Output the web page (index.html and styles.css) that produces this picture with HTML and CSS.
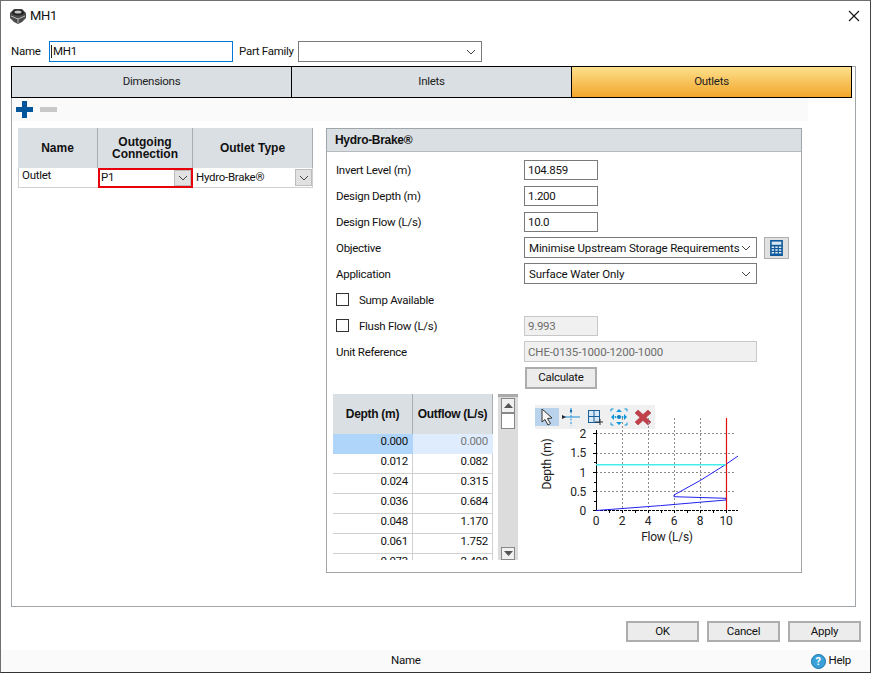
FILE: index.html
```html
<!DOCTYPE html>
<html lang="en">
<head>
<meta charset="utf-8">
<title>MH1</title>
<link rel="stylesheet" href="styles.css">
</head>
<body>
<div class="window">
  <div class="titlebar">
    <svg class="title-icon" width="18" height="16" viewBox="0 0 18 16"><path d="M1 5 L5 1 H13 L17 5 V10 L13 14 L9 16 L5 14 L1 10 Z" fill="#4a4a4a"/><ellipse cx="9" cy="4.500" rx="6" ry="3" fill="#222"/><ellipse cx="9" cy="4" rx="3.500" ry="1.500" fill="#c4c4c4"/><path d="M2 8 L9 11 L16 8 M9 11 V15" stroke="#bbb" fill="none"/></svg>
    <span class="title-text">MH1</span>
    <svg class="close" width="12" height="12" viewBox="0 0 12 12"><path d="M1 1 L11 11 M11 1 L1 11" stroke="#111" stroke-width="1.1"/></svg>
  </div>
  <div class="name-row">
    <label class="name-label">Name</label>
    <div class="input name-input"><span class="caret"></span>MH1</div>
    <label class="family-label">Part Family</label>
    <div class="input family-input"><svg class="chev" width="10" height="6" viewBox="0 0 10 6"><path d="M1 1 L5 5 L9 1" fill="none" stroke="#444"/></svg></div>
  </div>
  <div class="tabpanel">
    <div class="tabs">
      <div class="tab tab-a">Dimensions</div>
      <div class="tab tab-b">Inlets</div>
      <div class="tab tab-active">Outlets</div>
    </div>
    <div class="toolbar">
      <svg width="17" height="17" viewBox="0 0 17 17"><path d="M6 0 H11 V6 H17 V11 H11 V17 H6 V11 H0 V6 H6 Z" fill="#00559b"/></svg>
      <div class="minus"></div>
    </div>
    <div class="content">
      <div class="outlet-grid">
        <div class="og-head og-c1">Name</div>
        <div class="og-head og-c2">Outgoing<br>Connection</div>
        <div class="og-head og-c3">Outlet Type</div>
        <div class="og-cell og-c1 og-name">Outlet</div>
        <div class="og-cell og-c2 og-sel">P1<span class="cell-btn"><svg width="10" height="6" viewBox="0 0 10 6"><path d="M1 1 L5 5 L9 1" fill="none" stroke="#444"/></svg></span></div>
        <div class="og-cell og-c3 og-type">Hydro-Brake®<span class="cell-btn"><svg width="10" height="6" viewBox="0 0 10 6"><path d="M1 1 L5 5 L9 1" fill="none" stroke="#444"/></svg></span></div>
      </div>
      <div class="panel">
        <div class="panel-head">Hydro-Brake®</div>
        <div class="panel-body">
          <div class="row"><span class="lab">Invert Level (m)</span><div class="input num">104.859</div></div>
          <div class="row"><span class="lab">Design Depth (m)</span><div class="input num">1.200</div></div>
          <div class="row"><span class="lab">Design Flow (L/s)</span><div class="input num">10.0</div></div>
          <div class="row"><span class="lab">Objective</span><div class="input wide">Minimise Upstream Storage Requirements<svg class="chev" width="10" height="6" viewBox="0 0 10 6"><path d="M1 1 L5 5 L9 1" fill="none" stroke="#444"/></svg></div>
            <div class="calc-btn"><svg width="16" height="20" viewBox="0 0 16 20"><rect width="16" height="20" fill="#0f5a9c"/><rect x="2" y="2" width="12" height="4" fill="#d8e6f2"/><path d="M2 8h3v2H2zM6.500 8h3v2h-3zM11 8h3v2h-3zM2 11.500h3v2H2zM6.500 11.500h3v2h-3zM11 11.500h3v2h-3zM2 15h3v2H2zM6.500 15h3v2h-3zM11 15h3v2h-3z" fill="#e6eef6"/></svg></div>
          </div>
          <div class="row"><span class="lab">Application</span><div class="input wide">Surface Water Only<svg class="chev" width="10" height="6" viewBox="0 0 10 6"><path d="M1 1 L5 5 L9 1" fill="none" stroke="#444"/></svg></div></div>
          <div class="row"><span class="check"></span><span class="chk-lab">Sump Available</span></div>
          <div class="row"><span class="check"></span><span class="chk-lab chk-short">Flush Flow (L/s)</span><div class="input num disabled">9.993</div></div>
          <div class="row"><span class="lab">Unit Reference</span><div class="input wide disabled">CHE-0135-1000-1200-1000</div></div>
          <div class="row row-btn"><span class="spacer"></span><div class="button calc">Calculate</div></div>
          <div class="lower">
            <div class="table-wrap">
              <div class="table">
                <div class="th th1">Depth (m)</div><div class="th">Outflow (L/s)</div>
                <div class="td sel1">0.000</div><div class="td sel2">0.000</div>
                <div class="td">0.012</div><div class="td">0.082</div>
                <div class="td">0.024</div><div class="td">0.315</div>
                <div class="td">0.036</div><div class="td">0.684</div>
                <div class="td">0.048</div><div class="td">1.170</div>
                <div class="td">0.061</div><div class="td">1.752</div>
                <div class="td">0.073</div><div class="td">2.408</div>
              </div>
            </div>
            <div class="scroll">
              <div class="sb-btn"><svg width="9" height="5" viewBox="0 0 9 5"><path d="M0 5 L4.500 0 L9 5 Z" fill="#555"/></svg></div>
              <div class="sb-thumb"></div>
              <div class="sb-track"></div>
              <div class="sb-btn sb-down"><svg width="9" height="5" viewBox="0 0 9 5"><path d="M0 0 L4.500 5 L9 0 Z" fill="#555"/></svg></div>
            </div>
            <div class="chart">
              <div class="chart-tools">
                <span class="ct ct-on"><svg width="18" height="18" viewBox="0 0 18 18"><path d="M4 1 V14 L7 11.500 L10 17 L12.500 15.500 L9.500 10.500 L14 10 Z" fill="#f4f4f4" stroke="#333"/></svg></span>
                <span class="ct"><svg width="18" height="18" viewBox="0 0 18 18"><path d="M9 0 V18" stroke="#1a8fd6" stroke-dasharray="2 1.500"/><path d="M0 9 H18" stroke="#1a8fd6"/><path d="M0 7 L4 9 L0 11 Z" fill="#223"/><circle cx="9" cy="3" r="1.200" fill="#0c6fb0"/></svg></span>
                <span class="ct"><svg width="18" height="18" viewBox="0 0 18 18"><rect x="2.500" y="2.500" width="11" height="12" fill="#d6e9f8" stroke="#1a5f98"/><path d="M8 2.500 V14.500 M2.500 8.500 H13.500" stroke="#1a5f98"/><path d="M9 14 H17 M14 11 V17" stroke="#333"/></svg></span>
                <span class="ct"><svg width="18" height="18" viewBox="0 0 18 18"><path d="M9 1 L12 4 H6 Z M9 17 L6 14 H12 Z M1 9 L4 6 V12 Z M17 9 L14 12 V6 Z" fill="#0c95dc"/><circle cx="9" cy="9" r="2" fill="#0a7fc0"/><circle cx="5.500" cy="9" r="1" fill="#0c95dc"/><circle cx="12.500" cy="9" r="1" fill="#0c95dc"/><path d="M1 3.500 V1 H3.500 M14.500 1 H17 V3.500 M17 14.500 V17 H14.500 M3.500 17 H1 V14.500" fill="none" stroke="#0c95dc"/></svg></span>
                <span class="ct"><svg width="18" height="18" viewBox="0 0 18 18"><path d="M4 2 L9 6.500 L14 2 L17 5 L12 9.500 L17 14 L14 17 L9 12.500 L4 17 L1 14 L6 9.500 L1 5 Z" fill="#c2404a" stroke="#a8303a" stroke-width="0.500"/></svg></span>
              </div>
              <svg class="plot" width="240" height="137" viewBox="0 -2 240 137">
                <g stroke="#8c8c8c" stroke-dasharray="2 2" fill="none">
                  <path d="M71 13.500 H211 M71 33.500 H211 M71 52.500 H211 M71 71.500 H211"/>
                  <path d="M97.500 -2 V90 M123.500 -2 V90 M149.500 -2 V90 M175.500 -2 V90"/>
                </g>
                <path d="M71.500 10 V90" stroke="#000" fill="none"/>
                <path d="M71 90.500 H213" stroke="#000" stroke-dasharray="3 1" fill="none"/>
                <path d="M68 13.500h3M68 33.500h3M68 52.500h3M68 71.500h3M68 90.500h3M69 23.500h2M69 42.500h2M69 62.500h2M69 81.500h2" stroke="#000"/>
                <path d="M84.500 90v3M97.500 90v3M110.500 90v3M123.500 90v3M136.500 90v3M149.500 90v3M162.500 90v3M175.500 90v3M188.500 90v3M201.500 90v3" stroke="#000"/>
                <path d="M71 90.500 Q135 86 201 80 L201 78.300 L149 76.700 L149 75 Q176 61 201 44.300 L213 36" fill="none" stroke="#2222ee"/>
                <path d="M71 44.700 H201" stroke="#44eeee" stroke-width="1.500"/>
                <path d="M201.500 -2 V90" stroke="#e01010" stroke-width="1.200"/>
                <g class="ax" text-anchor="end">
                  <text x="61" y="18">2</text><text x="61" y="37">1.5</text><text x="61" y="57">1</text><text x="61" y="76">0.5</text><text x="61" y="95">0</text>
                </g>
                <g class="ax" text-anchor="middle">
                  <text x="71" y="105">0</text><text x="97" y="105">2</text><text x="123" y="105">4</text><text x="149" y="105">6</text><text x="175" y="105">8</text><text x="201" y="105">10</text>
                  <text x="142" y="121">Flow (L/s)</text>
                  <text transform="translate(26 44) rotate(-90)">Depth (m)</text>
                </g>
              </svg>
            </div>
          </div>
        </div>
      </div>
    </div>
  </div>
  <div class="actions">
    <div class="button act">OK</div>
    <div class="button act">Cancel</div>
    <div class="button act">Apply</div>
  </div>
  <div class="status">
    <span class="status-name">Name</span>
    <span class="help"><span class="help-icon">?</span>Help</span>
  </div>
</div>
</body>
</html>
```
FILE: styles.css
```css
* { box-sizing: border-box; }
html, body { margin: 0; padding: 0; }
body { width: 871px; height: 673px; overflow: hidden; background: #fff; font: 11.5px/1 Roboto, "Liberation Sans", Arial, sans-serif; letter-spacing: -0.28px; color: #111; }
.window { width: 871px; height: 673px; border: 1px solid #6f6f6f; border-right-color: #444; border-bottom-color: #333; background: #fff; display: flex; flex-direction: column; }
.titlebar { height: 29px; display: flex; align-items: center; padding: 0 10px 0 8px; flex: none; }
.title-text { margin-left: 3px; font-size: 13px; }
.close { margin-left: auto; }
.name-row { height: 21px; margin-top: 11px; display: flex; align-items: center; flex: none; padding-left: 10px; }
.name-label { width: 38px; }
.input { height: 21px; border: 1px solid #7a7a7a; background: #fff; display: flex; align-items: center; padding-left: 3px; position: relative; white-space: nowrap; }
.name-input { width: 184px; border-color: #0078d7; padding-left: 1px; }
.caret { width: 1px; height: 13px; background: #222; margin-right: 1px; }
.family-label { width: 59px; margin-left: 6px; white-space: nowrap; }
.family-input { width: 184px; }
.chev { position: absolute; right: 5px; top: 7px; }
.tabpanel { margin: 4px 14px 0 10px; width: 845px; height: 541px; border: 1px solid #a0a5aa; flex: none; }
.tabs { display: flex; height: 32px; margin: -1px 3px 0 -1px; border: 1px solid #000; background: #dadfe3; }
.tab { display: flex; align-items: center; justify-content: center; height: 30px; color: #222; }
.tab-a { width: 280px; border-right: 1px solid #000; }
.tab-b { width: 280px; border-right: 1px solid #000; }
.tab-active { flex: 1; background: linear-gradient(#fde08d, #f2a62a); }
.toolbar { height: 23px; width: 796px; background: #fafafa; display: flex; align-items: center; gap: 7px; padding-left: 4px; }
.minus { width: 17px; height: 5px; background: #c8c8c8; }
.content { display: flex; align-items: flex-start; padding: 7px 0 0 6px; }
.outlet-grid { display: grid; grid-template-columns: 80px 95px 120px; grid-template-rows: 40px 20px; width: 295px; flex: none; }
.og-head { background: #dadfe3; font: bold 12px/12px "Liberation Sans", Arial, sans-serif; letter-spacing: 0; display: flex; align-items: center; justify-content: center; text-align: center; border-right: 1px solid #a9aeb2; }
.og-cell { border-bottom: 1px solid #d0d0d0; background: #fff; display: flex; align-items: center; position: relative; }
.og-name { padding: 0 0 4px 3px; border-left: 1px solid #d0d0d0; }
.og-sel { border: 2px solid #e8000b; padding-left: 1px; }
.og-type { padding-left: 3px; border-right: 1px solid #d0d0d0; }
.cell-btn { position: absolute; right: 0; top: 1px; width: 17px; height: 17px; background: #e1e1e1; border: 1px solid #bdbdbd; display: flex; align-items: center; justify-content: center; }
.og-sel .cell-btn { top: 0; height: 16px; right: 0; }
.panel { width: 476px; height: 445px; margin-left: 13px; border: 1px solid #a0a5aa; flex: none; }
.panel-head { height: 23px; background: #dadfe3; border-bottom: 1px solid #b5babd; font: bold 12px/1 "Liberation Sans", Arial, sans-serif; letter-spacing: -0.3px; display: flex; align-items: center; padding-left: 8px; }
.panel-body { padding: 7px 0 0 9px; display: flex; flex-direction: column; gap: 5px; }
.row { display: flex; align-items: center; height: 21px; }
.lab { width: 188px; flex: none; padding-top: 2px; }
.spacer { width: 188px; flex: none; }
.panel-body .input { padding-top: 2px; }
.num { width: 74px; height: 20px; }
.wide { width: 233px; letter-spacing: -0.14px; }
.wide:not(.disabled) { padding-left: 4px; }
.disabled { background: #f0f0f0; border-color: #c8c8c8; color: #6d6d6d; }
.calc-btn { width: 25px; height: 22px; margin-left: 7px; background: #e1e1e1; border: 1px solid #adadad; display: flex; align-items: center; justify-content: center; }
.calc-btn svg { height: 16px; width: 13px; }
.check { width: 13px; height: 13px; border: 1px solid #333; flex: none; background: #fff; }
.chk-lab { margin-left: 10px; padding-top: 2px; }
.chk-short { width: 165px; flex: none; }
.row-btn { height: 22px; }
.button { background: #e1e1e1; border: 2px solid #adadad; display: flex; align-items: center; justify-content: center; }
.calc { width: 72px; height: 22px; margin-left: 1px; background: #ececec; }
.lower { display: flex; align-items: flex-start; margin: 0 0 0 -3px; }
.table-wrap { width: 160px; height: 166px; overflow: hidden; flex: none; }
.table { display: grid; grid-template-columns: 80px 80px; grid-template-rows: 40px; grid-auto-rows: 20px; }
.th { height: 40px; background: #dadfe3; font: bold 12px/1 "Liberation Sans", Arial, sans-serif; letter-spacing: -0.3px; display: flex; align-items: center; justify-content: center; border-right: 1px solid #a9aeb2; }
.td { height: 20px; border-bottom: 1px solid #d0d0d0; border-right: 1px solid #d0d0d0; text-align: right; padding: 1px 4px 0 0; line-height: 12px; background: #fff; }
.sel1 { background: #b0d5fb; border-bottom-color: #b0d5fb; border-right-color: #b0d5fb; }
.sel2 { background: #deecfd; color: #777; border-bottom-color: #deecfd; border-right-color: #deecfd; }
.scroll { width: 20px; height: 166px; margin-left: 5px; background: #dcdcdc; padding: 1px 3px 0; display: flex; flex-direction: column; flex: none; border-top: 3px solid #aaa; }
.sb-btn { width: 14px; height: 15px; background: #f0f0f0; border: 1px solid #888; display: flex; align-items: center; justify-content: center; flex: none; }
.sb-down { height: 13px; }
.sb-thumb { width: 14px; height: 16px; background: #fff; border: 1px solid #888; flex: none; }
.sb-track { flex: 1; }
.chart { width: 240px; height: 160px; margin: 11px 0 0 17px; flex: none; position: relative; }
.chart-tools { width: 120px; height: 24px; background: #f0f0f0; display: flex; align-items: center; }
.ct { width: 24px; height: 24px; display: flex; align-items: center; justify-content: center; }
.ct-on { background: #b9d3ec; height: 18px; }
.plot { position: absolute; left: -10px; top: 13px; }
.plot text { font: 12px Roboto, "Liberation Sans", Arial, sans-serif; fill: #222; }
.actions { display: flex; gap: 8px; justify-content: flex-end; padding-right: 9px; margin-top: 14px; flex: none; }
.act { width: 73px; height: 21px; background: #ececec; }
.status { height: 22px; margin-top: 8px; background: #fafafa; display: flex; align-items: center; flex: none; }
.status-name { margin-left: 390px; }
.help { margin-left: auto; margin-right: 19px; display: flex; align-items: center; gap: 3px; }
.help-icon { width: 15px; height: 15px; border-radius: 50%; background: #3aa0d8; border: 1px solid #1b75b0; color: #fff; font-weight: bold; font-size: 11px; display: flex; align-items: center; justify-content: center; }
```
